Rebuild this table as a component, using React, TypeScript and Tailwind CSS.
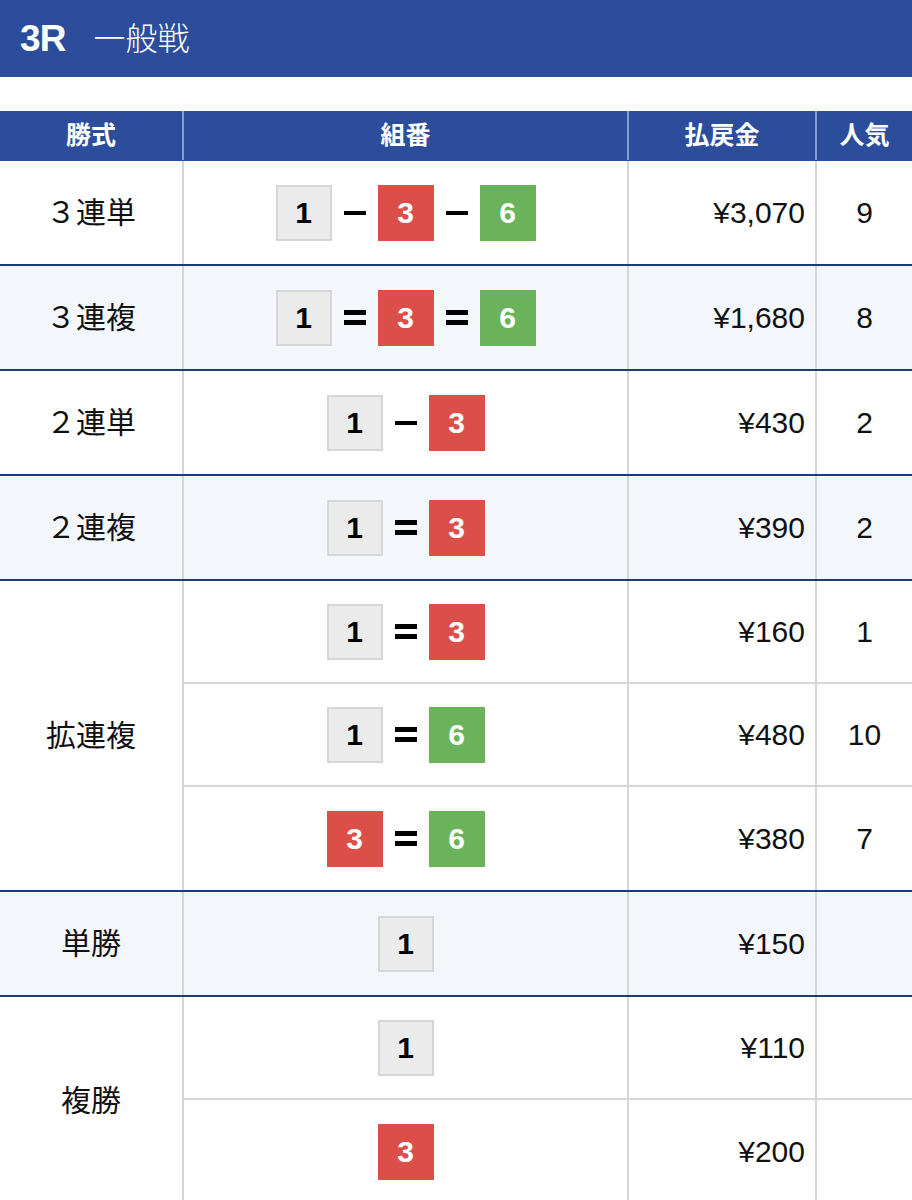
import React from 'react';

type Sep = '-' | '=';
type Pick = { nums: number[]; sep: Sep; pay: string; pop: string };
type Group = { label: string; alt: boolean; picks: Pick[] };

const groups: Group[] = [
  { label: '３連単', alt: false, picks: [{ nums: [1, 3, 6], sep: '-', pay: '¥3,070', pop: '9' }] },
  { label: '３連複', alt: true, picks: [{ nums: [1, 3, 6], sep: '=', pay: '¥1,680', pop: '8' }] },
  { label: '２連単', alt: false, picks: [{ nums: [1, 3], sep: '-', pay: '¥430', pop: '2' }] },
  { label: '２連複', alt: true, picks: [{ nums: [1, 3], sep: '=', pay: '¥390', pop: '2' }] },
  {
    label: '拡連複',
    alt: false,
    picks: [
      { nums: [1, 3], sep: '=', pay: '¥160', pop: '1' },
      { nums: [1, 6], sep: '=', pay: '¥480', pop: '10' },
      { nums: [3, 6], sep: '=', pay: '¥380', pop: '7' },
    ],
  },
  { label: '単勝', alt: true, picks: [{ nums: [1], sep: '-', pay: '¥150', pop: '' }] },
  {
    label: '複勝',
    alt: false,
    picks: [
      { nums: [1], sep: '-', pay: '¥110', pop: '' },
      { nums: [3], sep: '-', pay: '¥200', pop: '' },
    ],
  },
];

const font = { fontFamily: '"Liberation Sans", "Noto Sans CJK JP", sans-serif' };

const Box: React.FC<{ n: number }> = ({ n }) => {
  const color =
    n === 1
      ? 'bg-[#ebebeb] border-2 border-[#d6d6d6] text-black'
      : n === 3
      ? 'bg-[#dc4f48] text-white'
      : 'bg-[#6bb35a] text-white';
  return (
    <div className={`w-[56px] h-[56px] flex items-center justify-center text-[30px] font-bold ${color}`}>
      {n}
    </div>
  );
};

const SepMark: React.FC<{ sep: Sep }> = ({ sep }) =>
  sep === '-' ? (
    <div className="w-[22px] h-[4px] bg-black" />
  ) : (
    <div className="w-[22px] flex flex-col gap-[5px]">
      <div className="h-[5px] bg-black" />
      <div className="h-[5px] bg-black" />
    </div>
  );

export default function App() {
  return (
    <div className="w-[912px] h-[1200px] overflow-hidden bg-white" style={font}>
      {/* Race header */}
      <div className="h-[77px] bg-[#2c4d9c] flex items-center px-[20px] text-white">
        <span className="text-[37px] font-bold tracking-tight">3R</span>
        <span className="ml-[28px] text-[32px] font-light">一般戦</span>
      </div>

      <div className="h-[34px]" />

      {/* Table header */}
      <div className="h-[50px] bg-[#2c4d9c] flex text-white text-[25px] font-bold border-b border-[#2c4d9c]">
        <div className="w-[184px] flex items-center justify-center border-r-2 border-[#8a9cc8]">勝式</div>
        <div className="w-[445px] flex items-center justify-center border-r-2 border-[#8a9cc8]">組番</div>
        <div className="w-[188px] flex items-center justify-center border-r-2 border-[#8a9cc8]">払戻金</div>
        <div className="flex-1 flex items-center justify-center">人気</div>
      </div>

      {groups.map((g) => (
        <div
          key={g.label}
          className={`flex border-b-2 border-[#1f3c6e] ${g.alt ? 'bg-[#f3f6fb]' : 'bg-white'}`}
        >
          <div className="w-[184px] flex items-center justify-center border-r-2 border-[#d6d6d6] text-[30px] text-[#111]">
            {g.label}
          </div>
          <div className="flex-1 flex flex-col">
            {g.picks.map((p, i) => (
              <div
                key={i}
                className={`flex h-[103px] ${i < g.picks.length - 1 ? 'border-b-2 border-[#d6d6d6]' : ''}`}
              >
                <div className="w-[445px] flex items-center justify-center gap-[12px] border-r-2 border-[#d6d6d6]">
                  {p.nums.map((n, j) => (
                    <React.Fragment key={j}>
                      {j > 0 && <SepMark sep={p.sep} />}
                      <Box n={n} />
                    </React.Fragment>
                  ))}
                </div>
                <div className="w-[188px] flex items-center justify-end pr-[10px] border-r-2 border-[#d6d6d6] text-[30px] text-[#111]">
                  {p.pay}
                </div>
                <div className="flex-1 flex items-center justify-center text-[30px] text-[#111]">{p.pop}</div>
              </div>
            ))}
          </div>
        </div>
      ))}
    </div>
  );
}
